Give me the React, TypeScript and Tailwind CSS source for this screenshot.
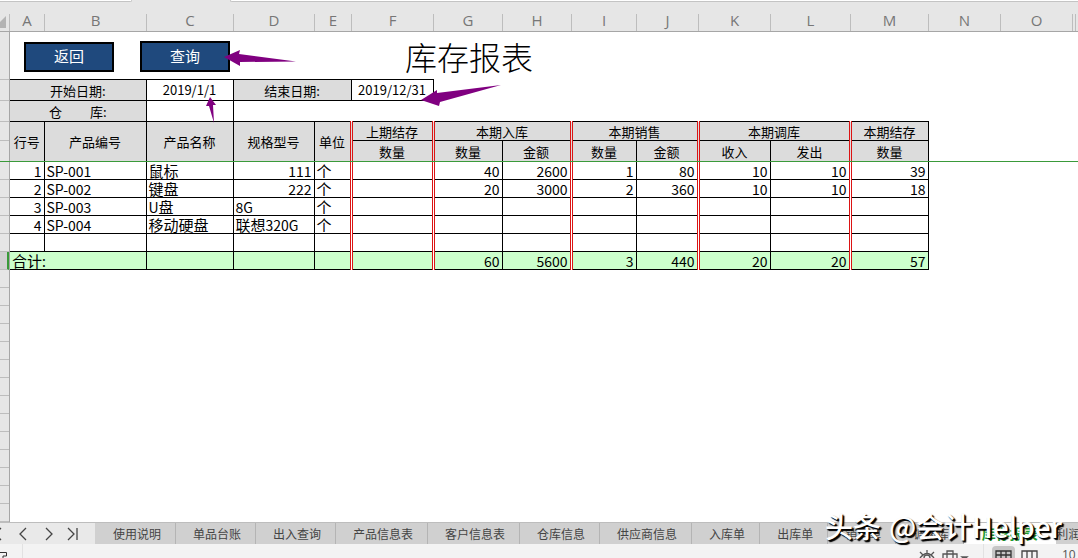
import React from 'react';

interface Product {
  no: number | null;
  code: string;
  name: string;
  spec: string | number;
  unit: string;
  figures: (number | null)[];
}

const COLUMNS = [
  { letter: 'A', width: 35 },
  { letter: 'B', width: 102 },
  { letter: 'C', width: 87 },
  { letter: 'D', width: 81 },
  { letter: 'E', width: 37 },
  { letter: 'F', width: 82 },
  { letter: 'G', width: 69 },
  { letter: 'H', width: 69 },
  { letter: 'I', width: 65 },
  { letter: 'J', width: 62 },
  { letter: 'K', width: 72 },
  { letter: 'L', width: 80 },
  { letter: 'M', width: 78 },
  { letter: 'N', width: 72 },
  { letter: 'O', width: 72 },
];

const PRODUCTS: Product[] = [
  { no: 1, code: 'SP-001', name: '鼠标', spec: 111, unit: '个', figures: [null, 40, 2600, 1, 80, 10, 10, 39] },
  { no: 2, code: 'SP-002', name: '键盘', spec: 222, unit: '个', figures: [null, 20, 3000, 2, 360, 10, 10, 18] },
  { no: 3, code: 'SP-003', name: 'U盘', spec: '8G', unit: '个', figures: Array(8).fill(null) },
  { no: 4, code: 'SP-004', name: '移动硬盘', spec: '联想320G', unit: '个', figures: Array(8).fill(null) },
  { no: null, code: '', name: '', spec: '', unit: '', figures: Array(8).fill(null) },
];

const TOTALS = [null, 60, 5600, 3, 440, 20, 20, 57];

const TABS = [
  '使用说明', '单品台账', '出入查询', '产品信息表', '客户信息表', '仓库信息',
  '供应商信息', '入库单', '出库单', '销售单', '调拨库', '库存报表', '利润表',
];
const ACTIVE_TAB = '库存报表';

// Figure columns that close a group carry the red double rule
const GROUP_END = [true, false, true, false, true, false, true, false];

const CELL = 'border border-black p-0';
const RULE = 'border-r-[3px] [border-right-style:double] border-r-[#dc1414]';
const HEAD = `${CELL} pt-px bg-[#dcdcdc] font-normal text-[13px] leading-4 text-center whitespace-nowrap`;
const BODY = `${CELL} align-bottom text-[15px] leading-[17px] whitespace-nowrap overflow-hidden`;
const INPUT = 'block w-full h-[18px] text-center text-[13px] outline-none';

// Latin characters run smaller than the Chinese ones
const Mixed: React.FC<{ text: string | number }> = ({ text }) => (
  <>
    {String(text)
      .split(/([\x20-\x7e]+)/)
      .filter(Boolean)
      .map((part, i) => (
        <span key={i} className={`leading-none ${/^[\x20-\x7e]/.test(part) ? 'text-[14px]' : 'text-[15px]'}`}>
          {part}
        </span>
      ))}
  </>
);

const ColumnHeader: React.FC = () => (
  <header className="h-8 shrink-0 flex flex-col bg-[#e6e6e6] border-b border-[#a6a6a6] overflow-hidden">
    <div className="flex h-[2px] shrink-0">
      <div className="w-[132px] bg-white border-b border-r border-[#c4c4c4] rounded-br" />
      <div className="w-[98px]" />
      <div className="flex-1 bg-white border-b border-l border-[#c4c4c4] rounded-bl" />
    </div>
    <div className="flex flex-1 pt-3">
      <div className="w-[10px] shrink-0 border-r border-[#bdbdbd] pt-[2px]">
        <svg width="6" height="12" viewBox="0 0 6 12">
          <path d="M6 0V12H0V6Z" fill="#b4b4b4" />
        </svg>
      </div>
      {COLUMNS.map((c) => (
        <div
          key={c.letter}
          style={{ width: c.width }}
          className="shrink-0 border-r border-[#bdbdbd] text-center text-[15px] leading-3 text-[#777] font-['Open_Sans',sans-serif]"
        >
          {c.letter}
        </div>
      ))}
      <div className="w-[3px] border-r border-[#bdbdbd]" />
    </div>
  </header>
);

const RowGutter: React.FC = () => (
  <div className="w-[10px] shrink-0 bg-[#e6e6e6] border-r border-[#a6a6a6] overflow-hidden">
    <div className="h-12 border-b border-[#bdbdbd]" />
    <div className="h-[21px] border-b border-[#bdbdbd]" />
    <div className="h-[21px] border-b border-[#bdbdbd]" />
    <div className="h-[19px] border-b border-[#bdbdbd]" />
    <div className="h-[21px] border-b border-[#bdbdbd]" />
    {Array.from({ length: 20 }, (_, i) => (
      <div
        key={i}
        className={`h-[18px] border-b border-[#bdbdbd] ${i === 5 ? 'bg-[#d2d0d2] border-r-2 border-r-[#3a9a3a]' : ''}`}
      />
    ))}
  </div>
);

const ReportTable: React.FC = () => (
  <table className="table-fixed border-collapse w-[918px] text-black">
    <colgroup>
      {/* Column A gives one pixel to the gutter border */}
      {COLUMNS.slice(0, 13).map((c, i) => (
        <col key={c.letter} style={{ width: i === 0 ? c.width - 1 : c.width }} />
      ))}
    </colgroup>
    <tbody>
      <tr className="h-[21px]">
        <th colSpan={2} className={`${HEAD} border-l-0`}>
          <label htmlFor="start">开始日期:</label>
        </th>
        <td className={CELL}>
          <input id="start" defaultValue="2019/1/1" className={INPUT} />
        </td>
        <th colSpan={2} className={HEAD}>
          <label htmlFor="end">结束日期:</label>
        </th>
        <td className={CELL}>
          <input id="end" defaultValue="2019/12/31" className={INPUT} />
        </td>
        <td colSpan={7} />
      </tr>
      <tr className="h-[21px]">
        <th colSpan={2} className={`${HEAD} border-l-0`}>
          <label htmlFor="store" className="flex justify-center gap-7">
            <span>仓</span>
            <span>库:</span>
          </label>
        </th>
        <td className={CELL}>
          <input id="store" className={INPUT} />
        </td>
        <td colSpan={10} />
      </tr>
      <tr className="h-[19px]">
        <th rowSpan={2} className={`${HEAD} border-l-0`}>行号</th>
        <th rowSpan={2} className={HEAD}>产品编号</th>
        <th rowSpan={2} className={HEAD}>产品名称</th>
        <th rowSpan={2} className={HEAD}>规格型号</th>
        <th rowSpan={2} className={`${HEAD} ${RULE}`}>单位</th>
        <th className={`${HEAD} ${RULE}`}>上期结存</th>
        <th colSpan={2} className={`${HEAD} ${RULE}`}>本期入库</th>
        <th colSpan={2} className={`${HEAD} ${RULE}`}>本期销售</th>
        <th colSpan={2} className={`${HEAD} ${RULE}`}>本期调库</th>
        <th className={HEAD}>本期结存</th>
      </tr>
      <tr className="h-[21px]">
        {['数量', '数量', '金额', '数量', '金额', '收入', '发出', '数量'].map((label, i) => (
          <th key={i} className={`${HEAD} ${GROUP_END[i] ? RULE : ''}`}>{label}</th>
        ))}
      </tr>
      {PRODUCTS.map((p, row) => (
        <tr key={row} className="h-[18px]">
          <td className={`${BODY} border-l-0 text-right pr-[2px]`}><Mixed text={p.no ?? ''} /></td>
          <td className={`${BODY} pl-[2px]`}><Mixed text={p.code} /></td>
          <td className={`${BODY} pl-[2px]`}><Mixed text={p.name} /></td>
          <td className={`${BODY} ${typeof p.spec === 'number' ? 'text-right pr-[2px]' : 'pl-[2px]'}`}>
            <Mixed text={p.spec} />
          </td>
          <td className={`${BODY} ${RULE} pl-[2px]`}><Mixed text={p.unit} /></td>
          {p.figures.map((n, i) => (
            <td key={i} className={`${BODY} text-right pr-[2px] ${GROUP_END[i] ? RULE : ''}`}>
              <Mixed text={n ?? ''} />
            </td>
          ))}
        </tr>
      ))}
      <tr className="h-[18px] bg-[#ccffcc]">
        <td colSpan={2} className={`${BODY} border-l-0 pl-[2px]`}><Mixed text="合计:" /></td>
        <td className={BODY} />
        <td className={BODY} />
        <td className={`${BODY} ${RULE}`} />
        {TOTALS.map((n, i) => (
          <td key={i} className={`${BODY} text-right pr-[2px] ${GROUP_END[i] ? RULE : ''}`}>
            <Mixed text={n ?? ''} />
          </td>
        ))}
      </tr>
    </tbody>
  </table>
);

const SheetTabs: React.FC = () => (
  <nav className="h-[22px] shrink-0 flex bg-[#e9e9e9] border-t border-[#bdbdbd] overflow-hidden">
    <div className="w-[95px] shrink-0 flex items-center text-[#444]">
      {[
        { label: '第一个', d: 'M1 1L-5 7L1 13', box: 'w-[16px]' },
        { label: '上一个', d: 'M10 1L4 7L10 13', box: 'w-[27px]' },
        { label: '下一个', d: 'M3 1L9 7L3 13', box: 'w-[24px]' },
        { label: '最后一个', d: 'M1 1L7 7L1 13M10 1V13', box: 'w-[24px]' },
      ].map((b) => (
        <button key={b.label} aria-label={b.label} className={b.box}>
          <svg width="12" height="14" viewBox="0 0 12 14" fill="none" stroke="currentColor" strokeWidth="1.3">
            <path d={b.d} />
          </svg>
        </button>
      ))}
    </div>
    {TABS.map((tab) => (
      <button
        key={tab}
        className={`shrink-0 border-r text-center whitespace-nowrap first-of-type:border-l first-of-type:border-l-[#d0d0d0] ${
          tab === ACTIVE_TAB
            ? 'w-[92px] bg-white border-white text-[14px] font-bold text-[#1f9a2e]'
            : 'pl-[17px] pr-[14px] bg-[#d0d0d0] border-[#b4b4b4] text-[12px] text-[#444] last:pl-0'
        }`}
      >
        {tab}
      </button>
    ))}
  </nav>
);

const StatusBar: React.FC = () => (
  <footer className="h-[14px] shrink-0 flex justify-between bg-[#f3f3f3] text-[#555] overflow-hidden">
    <div className="w-[23px] border-r border-[#e2e2e2] pt-[7px]">
      <svg width="8" height="8" viewBox="0 0 8 8" fill="none" stroke="#333">
        <path d="M0 1.5H6.5V5H3V8" />
      </svg>
    </div>
    <div className="flex items-start">
      <svg width="64" height="14" viewBox="0 0 64 14" fill="none" stroke="currentColor" strokeWidth="1.3">
        <path d="M1 14Q8 5 15 14M8 6V9M1 8L4 11M15 8L12 11" />
        <circle cx="8" cy="14" r="3" />
        <path d="M24 14V10H38V14M28 10V7H34V14M28 10V14" />
        <path d="M43 13H48L45.500 15Z" fill="currentColor" />
      </svg>
      <div className="w-[9px] h-full border-l border-[#e2e2e2]" />
      <button aria-label="普通视图" className="mt-[2px] w-[23px] h-4 rounded-t-sm bg-[#c6c6c6] pl-[3px] pt-1">
        <svg width="17" height="12" viewBox="0 0 17 12" fill="none" stroke="#333" strokeWidth="1.3">
          <path d="M1 12V1H16V12M1 5H16M1 9H16M6 1V12M11 1V12" />
        </svg>
      </button>
      <button aria-label="分页预览" className="mt-[2px] w-[47px] pl-[6px] pt-1 text-left">
        <svg width="17" height="12" viewBox="0 0 17 12" fill="none" stroke="#444" strokeWidth="1.3">
          <path d="M1 12V1H16V12M6 1V9M11 1V9M1 9H16" />
        </svg>
      </button>
      <span className="w-4 mt-[3px] text-[12px] leading-4 font-['Open_Sans',sans-serif]">10</span>
    </div>
  </footer>
);

const Arrows: React.FC = () => (
  <svg className="absolute left-0 top-0 pointer-events-none" width="520" height="130" viewBox="0 0 520 130" fill="#800080">
    <path d="M224 57L240 50L239 54L296 61.500L240 62L240 66Z" />
    <path d="M210 97L216 105L213 105L214 123L209 106L206 106Z" />
    <path d="M421 100L437 90L437 93L501 85L440 102L439 106Z" />
  </svg>
);

export default function App() {
  return (
    <div className="relative h-screen flex flex-col overflow-hidden bg-white font-['Noto_Sans_CJK_SC',sans-serif]">
      <ColumnHeader />
      <main className="relative flex-1 min-h-0 flex overflow-hidden">
        <RowGutter />
        <div className="flex-1 min-w-0">
          <div className="h-[47px] flex items-start pl-[14px]">
            <button className="mt-[10px] w-[90px] h-[30px] pb-[2px] border-2 border-black bg-[#1f497d] text-white text-[15px] leading-5">
              返回
            </button>
            <button className="mt-[9px] ml-[26px] w-[90px] h-[31px] pb-[2px] border-2 border-black bg-[#1f497d] text-white text-[15px] leading-5">
              查询
            </button>
            <h1 className="ml-[175px] mt-1 text-[32px] leading-10 font-light text-black">库存报表</h1>
          </div>
          <ReportTable />
        </div>
        {/* Freeze pane line */}
        <div className="absolute left-0 right-0 top-[129px] h-px bg-[#3a9a3a]" />
      </main>
      <SheetTabs />
      <StatusBar />
      <Arrows />
      <div className="absolute right-4 bottom-4 flex gap-2 text-[28px] leading-8 font-medium text-white whitespace-nowrap pointer-events-none [text-shadow:1px_1px_1px_#000,2px_2px_1px_#000]">
        <span>头条</span>
        <span>@会计Helper</span>
      </div>
    </div>
  );
}
